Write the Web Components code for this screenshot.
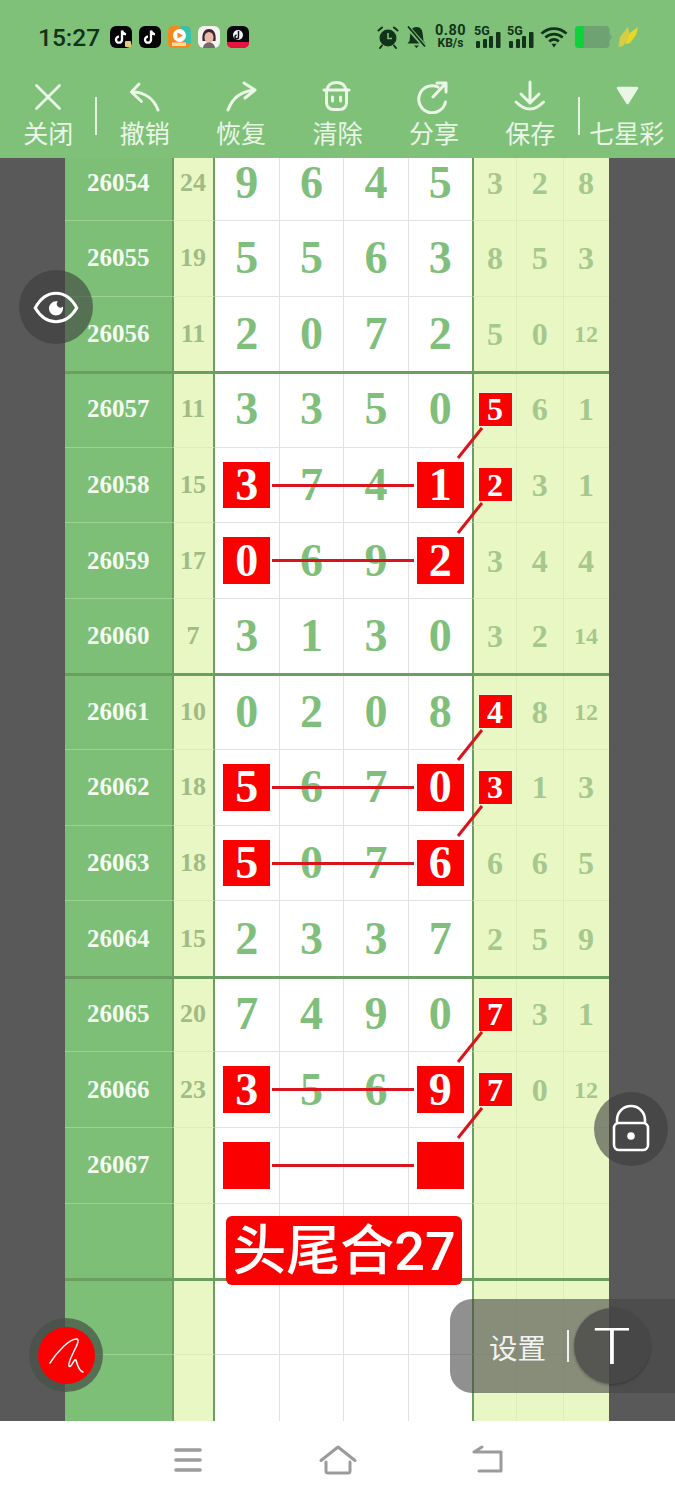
<!DOCTYPE html>
<html lang="zh">
<head>
<meta charset="utf-8">
<title>七星彩</title>
<style>
  html, body { margin: 0; padding: 0; }
  body {
    position: relative;
    width: 675px;
    height: 1500px;
    overflow: hidden;
    display: flex;
    flex-direction: column;
    background: #fff;
    font-family: "Noto Sans CJK SC", "Noto Sans", sans-serif;
  }
  #eye { left: 19px; top: 270px; }
  #lock { left: 594px; top: 1092px; }
  #pen { left: 29px; top: 1318px; }
  #panel { left: 450px; top: 1299px; }
</style>
</head>
<body>
  <status-bar>
    <span slot="time">15:27</span>
    <svg slot="apps" width="22" height="22" viewBox="0 0 22 22"><rect width="22" height="22" rx="6" fill="#050505"/><path d="M12 4.5v9.2a3 3 0 1 1-3-3M12 4.5c.4 2.4 1.900 3.600 4 3.900" fill="none" stroke="#fff" stroke-width="2.300"/><rect x="15" y="15" width="6" height="6" rx="1" fill="#e9c77a"/></svg>
    <svg slot="apps" width="22" height="22" viewBox="0 0 22 22"><rect width="22" height="22" rx="6" fill="#050505"/><path d="M12 4.500v9.200a3 3 0 1 1-3-3M12 4.500c.4 2.400 1.900 3.600 4 3.900" fill="none" stroke="#fff" stroke-width="2.300"/></svg>
    <svg slot="apps" width="23" height="22" viewBox="0 0 23 22"><rect width="23" height="22" rx="5" fill="#f28a1e"/><path d="M12 0h6a5 5 0 0 1 5 5v12l-6 0z" fill="#37c2ae"/><circle cx="11.500" cy="9.500" r="6.500" fill="#fff"/><path d="M9.500 6.500l5.500 3-5.500 3z" fill="#f28a1e"/><rect x="4" y="16.500" width="14" height="3.500" fill="#ffd8a8"/></svg>
    <svg slot="apps" width="22" height="22" viewBox="0 0 22 22"><rect width="22" height="22" rx="6" fill="#f6f4f2"/><path d="M4.500 15C3.500 6 7 3 11 3s7.500 3 6.500 12z" fill="#3a2a2e"/><ellipse cx="11" cy="11.500" rx="4.500" ry="5.500" fill="#e9b9aa"/><path d="M5 22c.5-4 3-5.500 6-5.500s5.500 1.500 6 5.500z" fill="#77666a"/></svg>
    <svg slot="apps" width="22" height="22" viewBox="0 0 22 22"><rect width="22" height="22" rx="6" fill="#07070c"/><path d="M0 16h22v1a5 5 0 0 1-5 5H5a5 5 0 0 1-5-5z" fill="#e5153f"/><circle cx="11" cy="9" r="5" fill="#eef3f3"/><path d="M11.500 5v6a1.800 1.800 0 1 1-1.800-1.800" fill="none" stroke="#07070c" stroke-width="1.400"/></svg>

    <svg slot="sys" style="margin-right:1px" width="22" height="24" viewBox="0 0 22 24"><circle cx="11" cy="13" r="8.500" fill="#10331a"/><path d="M11 8v5.500h4" fill="none" stroke="#7fc07a" stroke-width="1.600"/><path d="M1.500 5.500L5 2.500M20.500 5.500L17 2.500M5 20.500l-2 2.500M17 20.500l2 2.500" stroke="#10331a" stroke-width="2" stroke-linecap="round"/></svg>
    <svg slot="sys" width="21" height="24" viewBox="0 0 21 24"><path d="M10.500 2c4.200 0 6 3 6.200 7l.8 7 2 2.500H1.500l2-2.500.8-7c.2-4 2-7 6.200-7z" fill="#10331a"/><path d="M8 20.500h5L10.500 23z" fill="#10331a"/><path d="M2 2.500l17 19" stroke="#7fc07a" stroke-width="4.500"/><path d="M2 1.500l17 20" stroke="#10331a" stroke-width="1.800"/></svg>
    <net-speed slot="sys"><span>0.80</span><span slot="unit">KB/s</span></net-speed>
    <signal-icon slot="sys">5G</signal-icon>
    <signal-icon slot="sys">5G</signal-icon>
    <svg slot="sys" width="28" height="24" viewBox="0 0 29 24"><path d="M1.500 8.500C9 1.500 20 1.500 27.500 8.500M5.500 12.500C11 7.800 18 7.800 23.500 12.500M9.500 16.500C12.500 14 16.500 14 19.500 16.500" fill="none" stroke="#10331a" stroke-width="2.800"/><path d="M11.800 19h5.400l-2.700 4z" fill="#10331a"/></svg>
    <svg slot="sys" width="38" height="24" viewBox="0 0 38 24"><rect x="1" y="1" width="34.500" height="22" rx="4" fill="#6fa273"/><path d="M5 1h5v22H5a4 4 0 0 1-4-4V5a4 4 0 0 1 4-4z" fill="#0ed23c"/><path d="M35.500 8l2 3v2l-2 3z" fill="#6fa273"/></svg>
    <svg slot="sys" width="20" height="24" viewBox="0 0 20 24"><path d="M10 2L2 12l-1.500 10 4.500-1 7-11z" fill="#d7cd45"/><path d="M20 2L12 8l-5 11 5-1 6-8z" fill="#e8d824"/></svg>
  </status-bar>

  <tool-bar>
    <tool-item sep="right">
      <svg slot="icon" width="40" height="36" viewBox="0 0 40 36" fill="none" stroke="currentColor" stroke-width="2.800" stroke-linecap="round"><path d="M8.500 7.500l23 23M31.500 7.500l-23 23"/></svg>
      关闭
    </tool-item>
    <tool-item>
      <svg slot="icon" width="40" height="36" viewBox="0 0 40 36" fill="none" stroke="currentColor" stroke-width="3" stroke-linecap="round" stroke-linejoin="round"><path d="M14 6l-7.500 8 10 9.500M7 14c13 0 22 7 26 18"/></svg>
      撤销
    </tool-item>
    <tool-item>
      <svg slot="icon" width="40" height="36" viewBox="0 0 40 36" fill="none" stroke="currentColor" stroke-width="3" stroke-linecap="round" stroke-linejoin="round"><path d="M23 5l11 7-10 8M7 32c4-11 13-19 27-20"/></svg>
      恢复
    </tool-item>
    <tool-item>
      <svg slot="icon" width="40" height="36" viewBox="0 0 40 36" fill="none" stroke="currentColor" stroke-width="3" stroke-linecap="round" stroke-linejoin="round"><path d="M7 12h25M10 12c.8-5 4.500-7.500 9.500-7.500S28.200 7 29 12M9.500 12v13a6.500 6.500 0 0 0 6.500 6.500h7a6.500 6.500 0 0 0 6.500-6.500V12M15.500 19v4M23.500 19v4"/></svg>
      清除
    </tool-item>
    <tool-item>
      <svg slot="icon" width="40" height="36" viewBox="0 0 40 36" fill="none" stroke="currentColor" stroke-width="3" stroke-linecap="round" stroke-linejoin="round"><path d="M24 9A13.500 13.500 0 1 0 31.500 24M19 19L32 5M23 5h9v9"/></svg>
      分享
    </tool-item>
    <tool-item>
      <svg slot="icon" width="40" height="36" viewBox="0 0 40 36" fill="none" stroke="currentColor" stroke-width="3" stroke-linecap="round" stroke-linejoin="round"><path d="M20 4v20M11 16l9 9 9-9M6 24q14 14 27.500 0"/></svg>
      保存
    </tool-item>
    <tool-item sep="left">
      <svg slot="icon" width="40" height="36" viewBox="0 0 40 36"><path d="M11 10h19l-9.500 15z" fill="currentColor" stroke="currentColor" stroke-width="2.500" stroke-linejoin="round"/></svg>
      七星彩
    </tool-item>
  </tool-bar>

  <sheet-view>
    <draw-row num="26054" sum="24" main="9645" side="3 2 8"></draw-row>
    <draw-row num="26055" sum="19" main="5563" side="8 5 3"></draw-row>
    <draw-row num="26056" sum="11" main="2072" side="5 0 12" group></draw-row>
    <draw-row num="26057" sum="11" main="3350" side="5 6 1" boxed></draw-row>
    <draw-row num="26058" sum="15" main="3741" side="2 3 1" boxed link></draw-row>
    <draw-row num="26059" sum="17" main="0692" side="3 4 4" link></draw-row>
    <draw-row num="26060" sum="7" main="3130" side="3 2 14" group></draw-row>
    <draw-row num="26061" sum="10" main="0208" side="4 8 12" boxed></draw-row>
    <draw-row num="26062" sum="18" main="5670" side="3 1 3" boxed link></draw-row>
    <draw-row num="26063" sum="18" main="5076" side="6 6 5" link></draw-row>
    <draw-row num="26064" sum="15" main="2337" side="2 5 9" group></draw-row>
    <draw-row num="26065" sum="20" main="7490" side="7 3 1" boxed></draw-row>
    <draw-row num="26066" sum="23" main="3569" side="7 0 12" boxed link></draw-row>
    <draw-row num="26067" link></draw-row>
    <draw-row group><red-banner>头尾合27</red-banner></draw-row>
    <draw-row></draw-row>
    <draw-row></draw-row>
  </sheet-view>

  <nav-bar>
    <svg width="30" height="26" viewBox="0 0 30 26" fill="none" stroke="#9b9b9b" stroke-width="3.500" stroke-linecap="round"><path d="M3 3h24M3 13h24M3 23h24"/></svg>
    <svg width="38" height="30" viewBox="0 0 38 30" fill="none" stroke="#9b9b9b" stroke-width="3" stroke-linecap="round" stroke-linejoin="round"><path d="M2 15.500L19 2l17 13.500M7 17v9a2 2 0 0 0 2 2h20a2 2 0 0 0 2-2v-9"/></svg>
    <svg width="32" height="30" viewBox="0 0 32 30" fill="none" stroke="#9b9b9b" stroke-width="3" stroke-linecap="round" stroke-linejoin="round"><path d="M10 2L2 7h27v19H7"/></svg>
  </nav-bar>

  <float-ball id="eye">
    <svg width="46" height="34" viewBox="0 0 48 36"><path d="M2 19C8 8 16 3.500 24 3.500S40 8 46 19C40 29 32 33.500 24 33.500S8 29 2 19z" fill="none" stroke="#fff" stroke-width="3.200"/><path d="M24 12a7.500 7.500 0 1 0 7.500 7.500c0-.7-.1-1.300-.3-2a3.500 3.500 0 1 1-5.200-5.200c-.6-.2-1.300-.3-2-.3z" fill="#fff"/></svg>
  </float-ball>
  <float-ball id="lock">
    <svg width="40" height="50" viewBox="0 0 40 50" fill="none" stroke="#fff" stroke-width="2.600"><path d="M6 19v-3a14 14 0 0 1 28 0v3"/><rect x="3" y="19" width="34" height="27" rx="5"/><circle cx="20" cy="32" r="3.800" fill="#fff" stroke="none"/></svg>
  </float-ball>
  <float-ball id="pen" class="pen">
    <pen-dot>
      <svg width="57" height="57" viewBox="0 0 57 57" fill="none" stroke="#fff" stroke-width="1.500" stroke-linecap="round" stroke-linejoin="round"><path d="M12 36C19 25 32 11 39 12 44 14 29 33 31 39 33 42 36 31 38 33 39 37 41 44 45 45"/></svg>
    </pen-dot>
  </float-ball>
  <setting-panel id="panel">设置<span slot="ball">T</span></setting-panel>

<script>
  const sheet = (html) => {
    const t = document.createElement("template");
    t.innerHTML = html;
    return t;
  };

  // simple element: clones a template into an open shadow root
  const defineSimple = (name, html) => {
    const tpl = sheet(html);
    customElements.define(name, class extends HTMLElement {
      constructor() {
        super();
        this.attachShadow({ mode: "open" }).appendChild(tpl.content.cloneNode(true));
      }
    });
  };

  defineSimple("status-bar", `
    <style>
      :host {
        display: flex;
        align-items: center;
        height: 70px;
        flex: none;
        box-sizing: border-box;
        padding: 4px 0 0 38px;
        background: #80c17a;
        color: #10331a;
      }
      .time { font: 500 24.500px Roboto, sans-serif; width: 72px; }
      .apps { display: flex; gap: 7px; align-items: center; }
      .sys { display: flex; align-items: center; gap: 6px; margin-left: auto; margin-right: 37px; }
    </style>
    <div class="time"><slot name="time"></slot></div>
    <div class="apps"><slot name="apps"></slot></div>
    <div class="sys"><slot name="sys"></slot></div>
  `);

  defineSimple("net-speed", `
    <style>
      :host {
        display: flex;
        flex-direction: column;
        align-items: center;
        width: 29px;
        margin: 0 3px;
        font: 700 14.500px/12px Roboto, sans-serif;
        letter-spacing: .5px;
        color: #10331a;
      }
      .unit { font-size: 12px; letter-spacing: 0; }
    </style>
    <slot></slot>
    <div class="unit"><slot name="unit"></slot></div>
  `);

  defineSimple("signal-icon", `
    <style>
      :host {
        display: grid;
        width: 27px;
        height: 24px;
        font: 700 12.500px/11px Roboto, sans-serif;
        color: #10331a;
      }
      div, svg { grid-area: 1 / 1; }
    </style>
    <div><slot></slot></div>
    <svg width="27" height="24" viewBox="0 0 27 24" fill="#10331a"><rect x="2" y="16" width="4" height="7" rx="1"/><rect x="9" y="14" width="4" height="9" rx="1"/><rect x="15" y="11" width="4" height="12" rx="1"/><rect x="22" y="7" width="4.500" height="16" rx="1"/></svg>
  `);

  defineSimple("tool-bar", `
    <style>
      :host {
        display: grid;
        grid-template-columns: repeat(7, 1fr);
        height: 88px;
        flex: none;
        background: #80c17a;
        color: #eaf6e6;
      }
    </style>
    <slot></slot>
  `);

  defineSimple("tool-item", `
    <style>
      :host {
        position: relative;
        display: flex;
        flex-direction: column;
        align-items: center;
        padding-top: 8px;
        font-size: 25px;
        line-height: 37px;
        white-space: nowrap;
      }
      ::slotted(svg) { display: block; }
      :host([sep="right"])::after, :host([sep="left"])::before {
        content: "";
        position: absolute;
        top: 27px;
        width: 2px;
        height: 38px;
        background: #e4f3df;
      }
      :host([sep="right"])::after { right: -1px; }
      :host([sep="left"])::before { left: -1px; }
    </style>
    <slot name="icon"></slot>
    <slot></slot>
  `);

  defineSimple("sheet-view", `
    <style>
      :host {
        display: flex;
        height: 1263px;
        flex: none;
        box-sizing: border-box;
        padding-left: 65px;
        overflow: hidden;
        background: #595959;
      }
      .rows { width: 544px; margin-top: -12.700px; }
    </style>
    <div class="rows"><slot></slot></div>
  `);

  class DrawRow extends HTMLElement {
    constructor() {
      super();
      this.shadowDOM = this.attachShadow({ mode: "open" });
    }
    connectedCallback() {
      this.render();
    }

    render() {
      const num = this.getAttribute("num") || "";
      const sum = this.getAttribute("sum") || "";
      const main = (this.getAttribute("main") || "    ").split("");
      const side = (this.getAttribute("side") || "  ").split(" ");
      while (side.length < 3) side.push("");
      const link = this.hasAttribute("link");
      const boxed = this.hasAttribute("boxed");

      const mainCells = main.map((d, i) => {
        const hit = link && (i === 0 || i === 3);
        const txt = d.trim();
        return `<div class="m">${hit ? `<b class="hit">${txt}</b>` : txt}</div>`;
      }).join("");
      const sideCells = side.map((d, i) => {
        const small = d.length > 1 ? " two" : "";
        const inner = boxed && i === 0 ? `<b class="box">${d}</b>` : d;
        return `<div class="r${small}">${inner}</div>`;
      }).join("");

      this.shadowDOM.innerHTML = `
        <style>
          :host {
            position: relative;
            display: grid;
            grid-template-columns: 106.500px 43px 257.500px 137px;
            height: 75.600px;
            font-family: "Liberation Serif", serif;
            font-weight: 700;
          }
          /* thick line between the groups of four draws */
          :host([group])::after {
            content: "";
            position: absolute;
            left: 0;
            right: 0;
            bottom: -2px;
            height: 3px;
            z-index: 1;
            background: #6b9f61;
          }
          .col { box-sizing: border-box; border-bottom: 1.500px solid; display: flex; align-items: center; justify-content: center; }
          .id { background: #7dbf76; color: #f4fbf1; font-size: 25px; border-color: #9bd392; }
          .sum { background: #e9f7c5; color: #a0bb84; font-size: 26px; border-color: #dcedbb; border-left: 2px solid #6b9f61; border-right: 2.500px solid #6b9f61; }
          .main { display: grid; grid-template-columns: repeat(4, 1fr); align-items: stretch; justify-content: stretch; background: #fff; color: #80bf7b; font-size: 46px; border-color: #e2e2e2; }
          .side { display: grid; grid-template-columns: 42px 46.500px 46px; align-items: stretch; justify-content: stretch; background: #e9f7c5; color: #a6c78d; font-size: 32px; border-color: #dcedbb; border-left: 2.500px solid #6b9f61; }
          .m, .r { display: flex; align-items: center; justify-content: center; line-height: 1; }
          .m + .m { border-left: 1px solid #e2e2e2; }
          .r + .r { border-left: 1px solid #dcedbb; }
          .two { font-size: 24px; }
          .hit, .box { display: flex; align-items: center; justify-content: center; background: #fa0000; color: #fff; }
          .hit { width: 46.500px; height: 46.500px; }
          .box { width: 33px; height: 33px; font-size: 32px; box-shadow: 0 0 2px #fff; }
          .over { position: absolute; left: 0; top: 0; z-index: 2; overflow: visible; pointer-events: none; }
        </style>
        <div class="col id">${num}</div>
        <div class="col sum">${sum}</div>
        <div class="col main">${mainCells}</div>
        <div class="col side">${sideCells}</div>
        ${link ? `<svg class="over" width="544" height="75" stroke="#d8141c" stroke-width="3"><path d="M207 37.500H349" /><path d="M393 10L417 -20" /></svg>` : ""}
        <slot></slot>
      `;
    }
  }
  customElements.define("draw-row", DrawRow);

  defineSimple("red-banner", `
    <style>
      :host {
        position: absolute;
        z-index: 3;
        left: 161px;
        top: 12px;
        width: 236px;
        height: 69px;
        box-sizing: border-box;
        padding-top: 3px;
        display: flex;
        align-items: center;
        justify-content: center;
        border-radius: 6px;
        background: #fa0000;
        color: #fff;
        font: 500 54px/1 Roboto, "Noto Sans CJK SC", sans-serif;
        white-space: nowrap;
      }
    </style>
    <slot></slot>
  `);

  defineSimple("nav-bar", `
    <style>
      :host {
        display: flex;
        justify-content: center;
        align-items: center;
        flex: 1;
        padding-bottom: 1px;
        background: #fff;
      }
      ::slotted(svg) { width: 150px; }
    </style>
    <slot></slot>
  `);

  defineSimple("float-ball", `
    <style>
      :host {
        position: absolute;
        z-index: 5;
        width: 74px;
        height: 74px;
        display: flex;
        align-items: center;
        justify-content: center;
        border-radius: 50%;
        background: rgba(60, 60, 60, .6);
      }
      :host(.pen) { background: rgba(70, 80, 70, .72); }
    </style>
    <slot></slot>
  `);

  defineSimple("pen-dot", `
    <style>
      :host {
        display: flex;
        width: 57px;
        height: 57px;
        border-radius: 50%;
        background: #fa0000;
      }
    </style>
    <slot></slot>
  `);

  defineSimple("setting-panel", `
    <style>
      :host {
        position: absolute;
        z-index: 5;
        width: 225px;
        height: 94px;
        box-sizing: border-box;
        padding-left: 39px;
        display: flex;
        align-items: center;
        border-radius: 22px 0 0 22px;
        background: rgba(70, 70, 70, .6);
        color: #f2f2f2;
        font-size: 28.500px;
      }
      .bar { width: 2px; height: 32px; background: #f2f2f2; margin-left: 21px; flex: none; }
      .ball {
        width: 76px;
        height: 76px;
        margin-left: 5px;
        flex: none;
        border-radius: 50%;
        display: flex;
        align-items: center;
        justify-content: center;
        background: rgba(70, 70, 70, .75);
        box-shadow: 0 1px 3px rgba(0, 0, 0, .35);
        color: #fff;
        font: 300 50px/1 Roboto, sans-serif;
      }
      .ball slot { display: block; transform: translateY(1px) scaleX(1.25); }
    </style>
    <slot></slot>
    <div class="bar"></div>
    <div class="ball"><slot name="ball"></slot></div>
  `);
</script>
</body>
</html>
